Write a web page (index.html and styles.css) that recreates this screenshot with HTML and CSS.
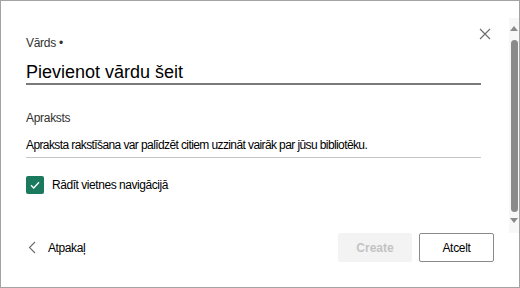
FILE: index.html
```html
<!DOCTYPE html>
<html lang="lv">
<head>
<meta charset="utf-8">
<link rel="stylesheet" href="styles.css">
</head>
<body>
<div class="frame">
  <div class="panel">
    <button class="close" aria-label="Aizvērt">
      <svg width="12" height="12" viewBox="0 0 12 12"><path d="M1 1 L11 11 M11 1 L1 11" stroke="#6b6b6b" stroke-width="1.1" fill="none"/></svg>
    </button>
    <div class="label">Vārds •</div>
    <div class="name-input">Pievienot vārdu šeit</div>
    <div class="label label-desc">Apraksts</div>
    <div class="desc-input">Apraksta rakstīšana var palīdzēt citiem uzzināt vairāk par jūsu bibliotēku.</div>
    <div class="check-row">
      <span class="checkbox">
        <svg width="12" height="12" viewBox="0 0 12 12"><path d="M2 6.3 L4.7 9 L10 3.2" stroke="#fff" stroke-width="1.3" fill="none"/></svg>
      </span>
      <span class="check-label">Rādīt vietnes navigācijā</span>
    </div>
    <div class="footer">
      <div class="back">
        <svg width="8" height="13" viewBox="0 0 8 13"><path d="M7 1 L1.5 6.5 L7 12" stroke="#6b6b6b" stroke-width="1.1" fill="none"/></svg>
        <span>Atpakaļ</span>
      </div>
      <div class="buttons">
        <button class="btn btn-disabled">Create</button>
        <button class="btn btn-default">Atcelt</button>
      </div>
    </div>
  </div>
  <div class="scrollbar">
    <span class="arrow-up"></span>
    <span class="thumb"></span>
    <span class="arrow-down"></span>
  </div>
</div>
</body>
</html>
```

FILE: styles.css
```css
* { box-sizing: border-box; }
html, body { margin: 0; padding: 0; background: #fff; }
body { font-family: "Liberation Sans", Arial, sans-serif; color: #000; }

.frame {
  width: 520px;
  height: 288px;
  border: 1px solid #a3a3a3;
  display: flex;
  background: #fff;
}

.panel {
  flex: 1;
  position: relative;
  display: flex;
  flex-direction: column;
  padding: 34px 15px 25px 25px;
}

.close {
  position: absolute;
  top: 26px;
  left: 477px;
  width: 14px;
  height: 14px;
  padding: 1px;
  border: 0;
  background: none;
  display: flex;
}

.label {
  font-size: 12px;
  line-height: 16px;
  color: #323130;
  letter-spacing: -0.3px;
}

.name-input {
  margin-top: 10px;
  margin-right: 13px;
  font-size: 18px;
  line-height: 22px;
  height: 24px;
  border-bottom: 2px solid #7a7a7a;
  color: #000;
}

.label-desc { margin-top: 25px; }

.desc-input {
  margin-top: 11px;
  margin-right: 13px;
  font-size: 12px;
  letter-spacing: -0.6px;
  line-height: 16px;
  padding-bottom: 4px;
  border-bottom: 1px solid #c6c6c6;
  color: #000;
  white-space: nowrap;
}

.check-row {
  margin-top: 18px;
  display: flex;
  align-items: center;
  gap: 8px;
}

.checkbox {
  width: 18px;
  height: 18px;
  border-radius: 2px;
  background: #1b7a5e;
  display: flex;
  align-items: center;
  justify-content: center;
}

.check-label {
  font-size: 12px;
  letter-spacing: -0.45px;
  color: #000;
}

.footer {
  margin-top: auto;
  display: flex;
  align-items: center;
  justify-content: space-between;
}

.back {
  display: flex;
  align-items: center;
  gap: 12px;
  padding-left: 2px;
  font-size: 12px;
  letter-spacing: -0.4px;
  color: #000;
}

.buttons {
  display: flex;
  gap: 7px;
}

.btn {
  height: 29px;
  font-family: inherit;
  font-size: 12px;
  border-radius: 2px;
  padding: 0;
}

.btn-disabled {
  width: 74px;
  background: #f3f3f3;
  border: 1px solid #f3f3f3;
  color: #c3c3c3;
  font-weight: bold;
}

.btn-default {
  width: 75px;
  background: #fff;
  border: 1px solid #8a8a8a;
  color: #000;
  letter-spacing: -0.3px;
}

.scrollbar {
  width: 10px;
  margin-top: 17px;
  height: 215px;
  background: #f7f7f7;
  display: flex;
  flex-direction: column;
  align-items: center;
  padding-top: 8px;
}

.arrow-up, .arrow-down {
  width: 0;
  height: 0;
  border-left: 4px solid transparent;
  border-right: 4px solid transparent;
}
.arrow-up { border-bottom: 5px solid #8a8a8a; }
.arrow-down { border-top: 5px solid #8a8a8a; margin-top: 6px; }

.thumb {
  margin-top: 9px;
  width: 7px;
  height: 172px;
  border-radius: 4px;
  background: #8a8a8a;
}
```
